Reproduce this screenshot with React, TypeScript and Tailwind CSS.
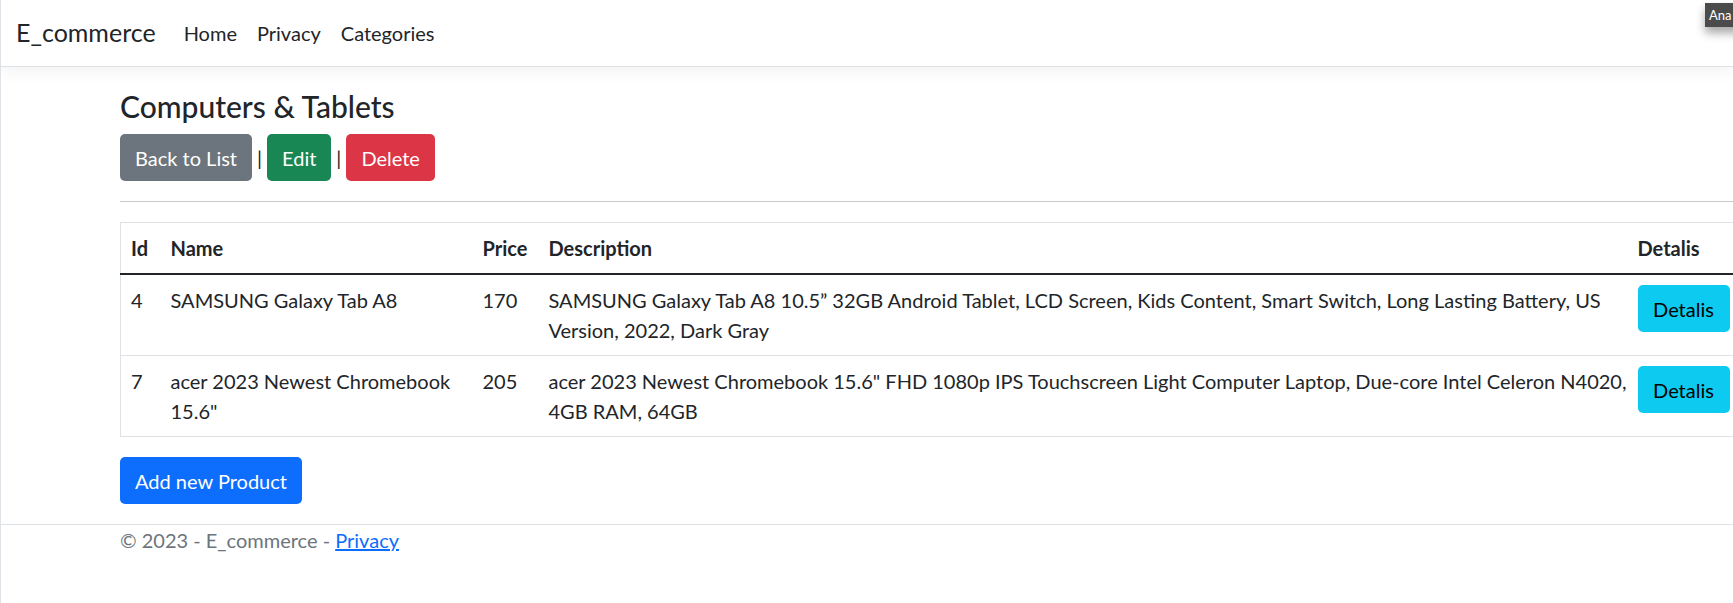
import React from 'react';

const products = [
  {
    id: 4,
    name: ['SAMSUNG Galaxy Tab A8'],
    price: 170,
    desc: [
      'SAMSUNG Galaxy Tab A8 10.5\u201D 32GB Android Tablet, LCD Screen, Kids Content, Smart Switch, Long Lasting Battery, US',
      'Version, 2022, Dark Gray',
    ],
  },
  {
    id: 7,
    name: ['acer 2023 Newest Chromebook', '15.6"'],
    price: 205,
    desc: [
      'acer 2023 Newest Chromebook 15.6" FHD 1080p IPS Touchscreen Light Computer Laptop, Due-core Intel Celeron N4020,',
      '4GB RAM, 64GB',
    ],
  },
];

function Lines({ lines }: { lines: string[] }) {
  return (
    <>
      {lines.map((l, i) => (
        <div key={i}>{l}</div>
      ))}
    </>
  );
}

export default function App() {
  return (
    <div className="relative w-[1733px] h-[603px] overflow-hidden bg-white border-l border-[#dfe3e8] text-[20px] leading-[30px] text-[#212529] font-['Segoe_UI','Lato',sans-serif]">
      {/* browser tooltip peeking in at the corner */}
      <div className="absolute left-[1704px] top-[3px] h-[24px] w-[40px] bg-[#4b4b4b] text-white text-[13px] leading-[24px] pl-[4px] shadow-[0_6px_10px_rgba(0,0,0,0.35)]">
        Ana
      </div>

      {/* Navbar */}
      <nav className="h-[67px] flex items-center border-b border-[#dee2e6] shadow-[0_5px_15px_rgba(0,0,0,0.05)] px-[15px]">
        <a className="text-[25px] leading-[37px] mr-[18px] pb-[2px]">E_commerce</a>
        <div className="flex">
          <a className="px-[10px]">Home</a>
          <a className="px-[10px]">Privacy</a>
          <a className="px-[10px]">Categories</a>
        </div>
      </nav>

      {/* Main */}
      <main className="pl-[119px] pt-[21px]">
        <h4 className="text-[30px] leading-[36px] font-medium mb-[10px]">Computers &amp; Tablets</h4>
        <div className="flex items-center">
          <button className="h-[47px] px-[15px] rounded-[5px] bg-[#6c757d] text-white">Back to List</button>
          <span className="px-[5px]">|</span>
          <button className="h-[47px] px-[15px] rounded-[5px] bg-[#198754] text-white">Edit</button>
          <span className="px-[5px]">|</span>
          <button className="h-[47px] px-[15px] rounded-[5px] bg-[#dc3545] text-white">Delete</button>
        </div>
        <hr className="my-[20px] border-0 border-t border-[#c8c9ca]" />

        <table className="table-fixed w-[1620px] border border-[#dee2e6] border-collapse text-left">
          <colgroup>
            <col className="w-[40px]" />
            <col className="w-[312px]" />
            <col className="w-[66px]" />
            <col className="w-[1089px]" />
            <col className="w-[113px]" />
          </colgroup>
          <thead>
            <tr className="border-b-2 border-[#212529]">
              <th className="px-[10px] py-[10px] font-bold">Id</th>
              <th className="px-[10px] py-[10px] font-bold">Name</th>
              <th className="px-[10px] py-[10px] font-bold">Price</th>
              <th className="px-[10px] py-[10px] font-bold">Description</th>
              <th className="px-[10px] py-[10px] font-bold">Detalis</th>
            </tr>
          </thead>
          <tbody>
            {products.map((p) => (
              <tr key={p.id} className="border-b border-[#dee2e6] align-top">
                <td className="px-[10px] py-[10px]">{p.id}</td>
                <td className="px-[10px] py-[10px] whitespace-nowrap">
                  <Lines lines={p.name} />
                </td>
                <td className="px-[10px] py-[10px]">{p.price}</td>
                <td className="px-[10px] py-[10px] whitespace-nowrap">
                  <Lines lines={p.desc} />
                </td>
                <td className="px-[10px] py-[10px]">
                  <button className="h-[47px] w-[92px] rounded-[5px] bg-[#0dcaf0] text-black">Detalis</button>
                </td>
              </tr>
            ))}
          </tbody>
        </table>

        <button className="mt-[20px] h-[47px] px-[15px] rounded-[5px] bg-[#0d6efd] text-white">Add new Product</button>
      </main>

      {/* Footer */}
      <footer className="mt-[20px] border-t border-[#dee2e6] pl-[119px] text-[#6c757d]">
        © 2023 - E_commerce - <a className="text-[#0d6efd] underline">Privacy</a>
      </footer>
    </div>
  );
}
